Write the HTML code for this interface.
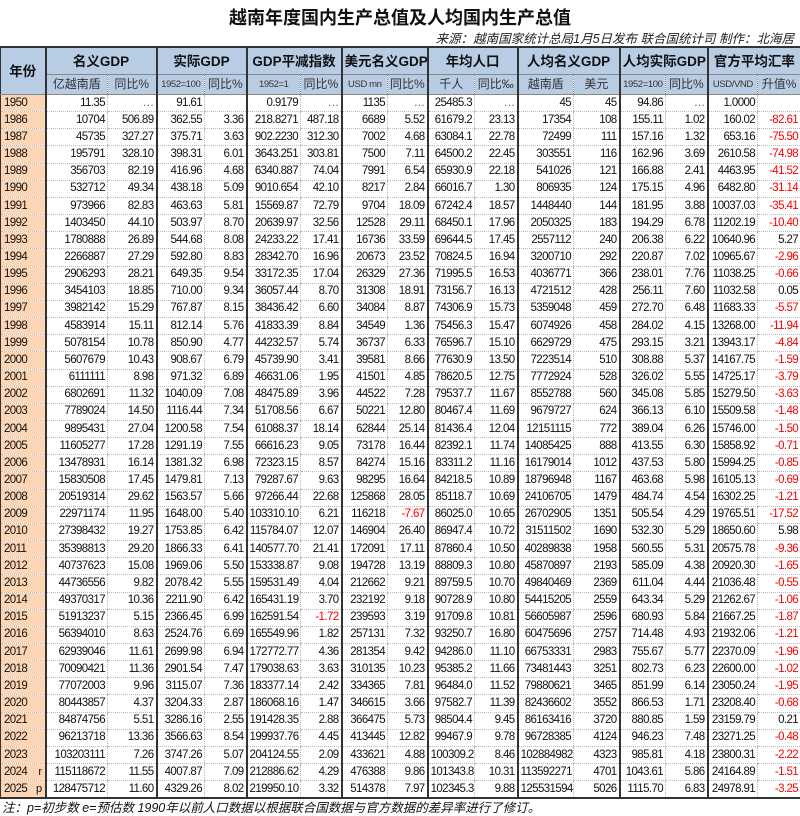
<!DOCTYPE html>
<html><head><meta charset="utf-8"><style>
body{margin:0;width:800px;height:816px;background:#fff;position:relative;overflow:hidden;font-family:"Liberation Sans","Noto Sans CJK SC",sans-serif}
.t{position:absolute;top:4px;left:0;width:800px;text-align:center;font-weight:bold;font-size:18px;color:#111}
.s{position:absolute;top:28px;right:6px;font-style:italic;font-size:12.5px;color:#222}
table{position:absolute;top:46px;left:0;border-collapse:collapse;table-layout:fixed;width:800px;font-family:"Liberation Sans","Noto Sans CJK SC",sans-serif;font-size:11.5px;letter-spacing:-0.6px;color:#111}
td{padding:0 2px;border-left:1px dotted #bbb;border-bottom:1px dotted #bbb;text-align:right;white-space:nowrap;overflow:hidden;line-height:15px}
tr.d{height:17.17px}
td.g{border-left:2px solid #333}
td.y{text-align:left;background:#fcd5b4;border-left:1px solid #333;position:relative;padding-left:3px}
td.y i{position:absolute;right:3px;font-style:normal;font-size:11px}
.h td{background:#b8cce4;text-align:center;border-left:2px solid #333;border-bottom:1px solid #888;letter-spacing:0}
.h1 td{font-weight:bold;font-size:13.5px;height:26px;border-top:2px solid #333}
.h2 td{height:19px;font-size:12px;color:#333}
.h2 td.n{border-left:1px dotted #888}
.h2 td.sm{font-size:9.5px;letter-spacing:-0.4px}
.r{color:#f00}
tr.last td{border-bottom:2px solid #333}
.f{position:absolute;top:797px;left:2px;font-size:12.5px;font-style:italic;color:#111}
</style></head><body>
<div class="t">越南年度国内生产总值及人均国内生产总值</div>
<div class="s">来源：越南国家统计总局1月5日发布 联合国统计司 制作：北海居</div>
<table>
<colgroup><col style="width:45px"><col style="width:62px"><col style="width:49px"><col style="width:48px"><col style="width:42px"><col style="width:54px"><col style="width:41px"><col style="width:46px"><col style="width:40px"><col style="width:47px"><col style="width:43px"><col style="width:56px"><col style="width:46px"><col style="width:46px"><col style="width:42px"><col style="width:50px"><col style="width:43px"></colgroup>
<tr class="h h1"><td rowspan="2" style="border-left:1px solid #333">年份</td><td colspan="2">名义GDP</td><td colspan="2">实际GDP</td><td colspan="2">GDP平减指数</td><td colspan="2">美元名义GDP</td><td colspan="2">年均人口</td><td colspan="2">人均名义GDP</td><td colspan="2">人均实际GDP</td><td colspan="2" style="border-right:1px solid #333">官方平均汇率</td></tr>
<tr class="h h2"><td>亿越南盾</td><td class="n">同比%</td><td class="sm">1952=100</td><td class="n">同比%</td><td class="sm">1952=1</td><td class="n">同比%</td><td class="sm">USD mn</td><td class="n">同比%</td><td>千人</td><td class="n">同比‰</td><td>越南盾</td><td class="n">美元</td><td class="sm">1952=100</td><td class="n">同比%</td><td class="sm">USD/VND</td><td class="n" style="border-right:1px solid #333">升值%</td></tr>
<tbody id="b"></tbody>
</table>
<div class="f">注：p=初步数 e=预估数 1990年以前人口数据以根据联合国数据与官方数据的差异率进行了修订。</div>
<script>
var D=`1950|11.35|…|91.61||0.9179|…|1135|…|25485.3|…|45|45|94.86|…|1.0000|
1986|10704|506.89|362.55|3.36|218.8271|487.18|6689|5.52|61679.2|23.13|17354|108|155.11|1.02|160.02|-82.61
1987|45735|327.27|375.71|3.63|902.2230|312.30|7002|4.68|63084.1|22.78|72499|111|157.16|1.32|653.16|-75.50
1988|195791|328.10|398.31|6.01|3643.251|303.81|7500|7.11|64500.2|22.45|303551|116|162.96|3.69|2610.58|-74.98
1989|356703|82.19|416.96|4.68|6340.887|74.04|7991|6.54|65930.9|22.18|541026|121|166.88|2.41|4463.95|-41.52
1990|532712|49.34|438.18|5.09|9010.654|42.10|8217|2.84|66016.7|1.30|806935|124|175.15|4.96|6482.80|-31.14
1991|973966|82.83|463.63|5.81|15569.87|72.79|9704|18.09|67242.4|18.57|1448440|144|181.95|3.88|10037.03|-35.41
1992|1403450|44.10|503.97|8.70|20639.97|32.56|12528|29.11|68450.1|17.96|2050325|183|194.29|6.78|11202.19|-10.40
1993|1780888|26.89|544.68|8.08|24233.22|17.41|16736|33.59|69644.5|17.45|2557112|240|206.38|6.22|10640.96|5.27
1994|2266887|27.29|592.80|8.83|28342.70|16.96|20673|23.52|70824.5|16.94|3200710|292|220.87|7.02|10965.67|-2.96
1995|2906293|28.21|649.35|9.54|33172.35|17.04|26329|27.36|71995.5|16.53|4036771|366|238.01|7.76|11038.25|-0.66
1996|3454103|18.85|710.00|9.34|36057.44|8.70|31308|18.91|73156.7|16.13|4721512|428|256.11|7.60|11032.58|0.05
1997|3982142|15.29|767.87|8.15|38436.42|6.60|34084|8.87|74306.9|15.73|5359048|459|272.70|6.48|11683.33|-5.57
1998|4583914|15.11|812.14|5.76|41833.39|8.84|34549|1.36|75456.3|15.47|6074926|458|284.02|4.15|13268.00|-11.94
1999|5078154|10.78|850.90|4.77|44232.57|5.74|36737|6.33|76596.7|15.10|6629729|475|293.15|3.21|13943.17|-4.84
2000|5607679|10.43|908.67|6.79|45739.90|3.41|39581|8.66|77630.9|13.50|7223514|510|308.88|5.37|14167.75|-1.59
2001|6111111|8.98|971.32|6.89|46631.06|1.95|41501|4.85|78620.5|12.75|7772924|528|326.02|5.55|14725.17|-3.79
2002|6802691|11.32|1040.09|7.08|48475.89|3.96|44522|7.28|79537.7|11.67|8552788|560|345.08|5.85|15279.50|-3.63
2003|7789024|14.50|1116.44|7.34|51708.56|6.67|50221|12.80|80467.4|11.69|9679727|624|366.13|6.10|15509.58|-1.48
2004|9895431|27.04|1200.58|7.54|61088.37|18.14|62844|25.14|81436.4|12.04|12151115|772|389.04|6.26|15746.00|-1.50
2005|11605277|17.28|1291.19|7.55|66616.23|9.05|73178|16.44|82392.1|11.74|14085425|888|413.55|6.30|15858.92|-0.71
2006|13478931|16.14|1381.32|6.98|72323.15|8.57|84274|15.16|83311.2|11.16|16179014|1012|437.53|5.80|15994.25|-0.85
2007|15830508|17.45|1479.81|7.13|79287.67|9.63|98295|16.64|84218.5|10.89|18796948|1167|463.68|5.98|16105.13|-0.69
2008|20519314|29.62|1563.57|5.66|97266.44|22.68|125868|28.05|85118.7|10.69|24106705|1479|484.74|4.54|16302.25|-1.21
2009|22971174|11.95|1648.00|5.40|103310.10|6.21|116218|-7.67|86025.0|10.65|26702905|1351|505.54|4.29|19765.51|-17.52
2010|27398432|19.27|1753.85|6.42|115784.07|12.07|146904|26.40|86947.4|10.72|31511502|1690|532.30|5.29|18650.60|5.98
2011|35398813|29.20|1866.33|6.41|140577.70|21.41|172091|17.11|87860.4|10.50|40289838|1958|560.55|5.31|20575.78|-9.36
2012|40737623|15.08|1969.06|5.50|153338.87|9.08|194728|13.19|88809.3|10.80|45870897|2193|585.09|4.38|20920.30|-1.65
2013|44736556|9.82|2078.42|5.55|159531.49|4.04|212662|9.21|89759.5|10.70|49840469|2369|611.04|4.44|21036.48|-0.55
2014|49370317|10.36|2211.90|6.42|165431.19|3.70|232192|9.18|90728.9|10.80|54415205|2559|643.34|5.29|21262.67|-1.06
2015|51913237|5.15|2366.45|6.99|162591.54|-1.72|239593|3.19|91709.8|10.81|56605987|2596|680.93|5.84|21667.25|-1.87
2016|56394010|8.63|2524.76|6.69|165549.96|1.82|257131|7.32|93250.7|16.80|60475696|2757|714.48|4.93|21932.06|-1.21
2017|62939046|11.61|2699.98|6.94|172772.77|4.36|281354|9.42|94286.0|11.10|66753331|2983|755.67|5.77|22370.09|-1.96
2018|70090421|11.36|2901.54|7.47|179038.63|3.63|310135|10.23|95385.2|11.66|73481443|3251|802.73|6.23|22600.00|-1.02
2019|77072003|9.96|3115.07|7.36|183377.14|2.42|334365|7.81|96484.0|11.52|79880621|3465|851.99|6.14|23050.24|-1.95
2020|80443857|4.37|3204.33|2.87|186068.16|1.47|346615|3.66|97582.7|11.39|82436602|3552|866.53|1.71|23208.40|-0.68
2021|84874756|5.51|3286.16|2.55|191428.35|2.88|366475|5.73|98504.4|9.45|86163416|3720|880.85|1.59|23159.79|0.21
2022|96213718|13.36|3566.63|8.54|199937.76|4.45|413445|12.82|99467.9|9.78|96728385|4124|946.23|7.48|23271.25|-0.48
2023|103203111|7.26|3747.26|5.07|204124.55|2.09|433621|4.88|100309.2|8.46|102884982|4323|985.81|4.18|23800.31|-2.22
2024r|115118672|11.55|4007.87|7.09|212886.62|4.29|476388|9.86|101343.8|10.31|113592271|4701|1043.61|5.86|24164.89|-1.51
2025p|128475712|11.60|4329.26|8.02|219950.10|3.32|514378|7.97|102345.3|9.88|125531594|5026|1115.70|6.83|24978.91|-3.25`.split("\n");
var h="";D.forEach(function(l,i){var c=l.split("|");var y=c[0],m="";if(y.length>4){m="<i>"+y[4]+"</i>";y=y.slice(0,4);}
h+='<tr class="d'+(i==D.length-1?' last':'')+'"><td class="y">'+y+m+'</td>';
for(var k=1;k<17;k++){var v=c[k]||"";var cls=[];if(k%2==1)cls.push("g");if(v[0]=="-"&&(k==16||k==6||k==8))cls.push("r");if(v=="…")v='<span style="color:#555">…</span>';
h+='<td class="'+cls.join(" ")+'"'+(k==16?' style="border-right:1px solid #333"':'')+'>'+v+'</td>';}
h+='</tr>';});document.getElementById("b").innerHTML=h;
</script>
</body></html>
